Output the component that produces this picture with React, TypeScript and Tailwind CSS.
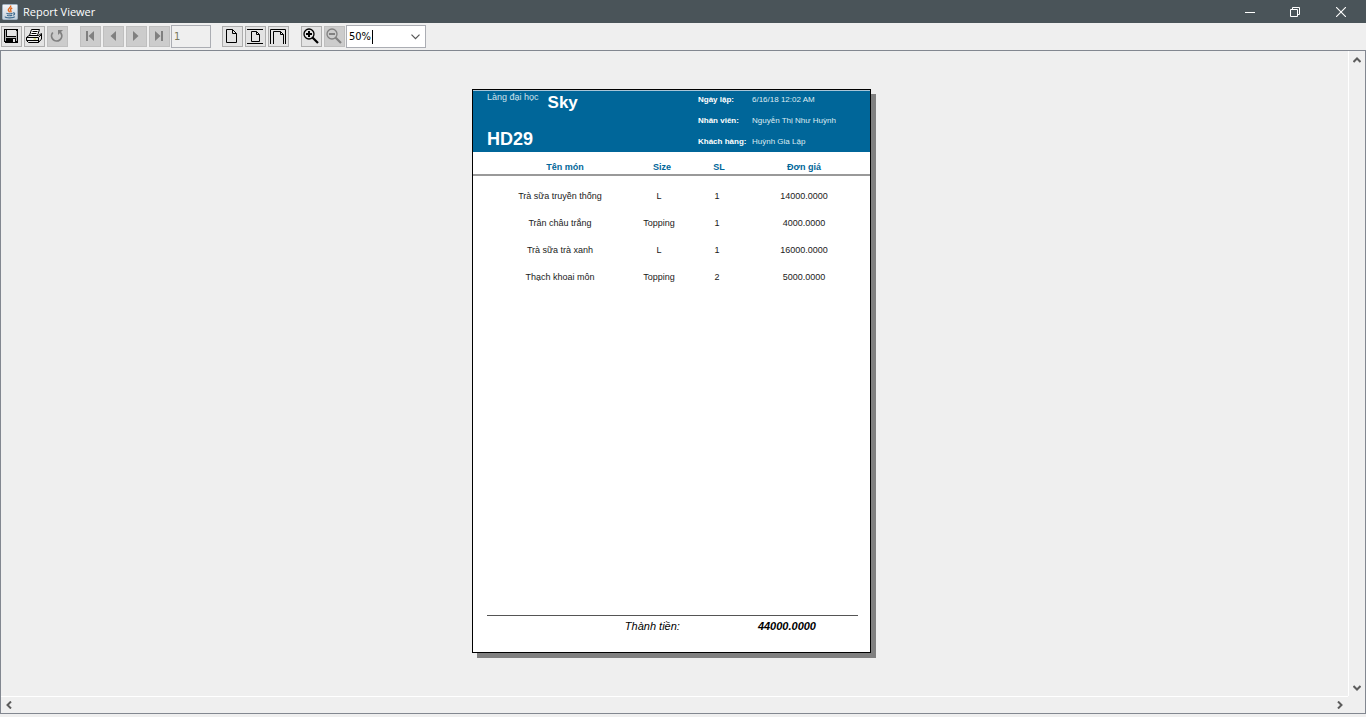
import type { ReactNode } from "react";

const INK = "#000000";
const MUTED = "#808080";

function Icon({ children }: { children: ReactNode }) {
  return (
    <svg viewBox="1 1 19 19" className="block size-[19px]" fill="none" aria-hidden="true">
      {children}
    </svg>
  );
}

function ToolButton({ label, disabled, children }: { label: string; disabled?: boolean; children: ReactNode }) {
  return (
    <button
      type="button"
      aria-label={label}
      disabled={disabled}
      className="size-[21px] shrink-0 border border-[#adadad] bg-[#e3e3e3] disabled:border-[#bfbfbf] disabled:bg-[#cccccc]"
    >
      <Icon>{children}</Icon>
    </button>
  );
}

function JavaIcon() {
  return (
    <svg viewBox="0 0 16 16" className="size-4 shrink-0" fill="none" aria-hidden="true">
      <defs>
        <linearGradient id="java-tile" x1="0" y1="0" x2="0" y2="1">
          <stop offset="0" stopColor="#f4f6f8" />
          <stop offset="1" stopColor="#c3d0dc" />
        </linearGradient>
      </defs>
      <rect x="0.5" y="0.5" width="15" height="15" rx="1" fill="url(#java-tile)" stroke="#9fb2c2" />
      <path d="M8.6 1.5C9.6 3.4 6 4.3 6.3 6C6.5 6.9 7.3 7.3 7.6 8.4M10.2 4C8.4 4.9 8.1 5.7 8.8 6.6C9.3 7.3 9 7.9 8.6 8.4" stroke="#e2661b" strokeWidth="1.4" />
      <path d="M4.4 9.3C5.6 9.8 9 9.8 10.6 9.2M5 11.2C6.4 11.8 9 11.7 10.2 11.1M11 9C13.2 8.6 13 10.6 11.2 11.3M3 12.6C3.4 14.2 11.6 14.2 12.8 12.7" stroke="#3f6c8e" strokeWidth="1.2" />
    </svg>
  );
}

function Magnifier({ color, plus }: { color: string; plus?: boolean }) {
  return (
    <>
      <circle cx="8" cy="8" r="5" stroke={color} strokeWidth="1.3" />
      <path d="M5 8H11" stroke={color} strokeWidth="2" />
      {plus && <path d="M8 5V11" stroke={color} strokeWidth="2" />}
      <path d="M11.5 11.5L17 17" stroke={color} strokeWidth="2.2" />
    </>
  );
}

function Toolbar() {
  return (
    <div className="flex h-[27px] shrink-0 items-center pl-px" role="toolbar" aria-label="Report">
      <div className="flex gap-[2px]">
        <ToolButton label="Save">
          <g shapeRendering="crispEdges">
            <path d="M3 3H17V17H4L3 16Z" fill={INK} />
            <rect x="6" y="4" width="9" height="6" fill="#e3e3e3" />
            <rect x="4" y="4" width="1" height="11" fill="#b0b0b0" />
            <rect x="15" y="5" width="1" height="10" fill="#b0b0b0" />
            <rect x="5" y="11" width="10" height="1" fill="#b0b0b0" />
            <rect x="12" y="13" width="2" height="3" fill="#e3e3e3" />
          </g>
        </ToolButton>
        <ToolButton label="Print">
          <path d="M7.5 3.5H15.5L13.5 9.5H5.5Z" fill="#fff" stroke={INK} />
          <path d="M8.5 5.5H13.5M7.5 7.5H12.5" stroke={INK} />
          <path d="M2.5 11.5L5 9.5H14.5L17.5 7.5V13L14.5 16.5H4.5L2.5 14.5Z" fill="#e8e8e8" stroke={INK} />
          <path d="M2.5 11.5H14.5L17.5 8.5M3 14.5H14.5M14.5 12V16.5" stroke={INK} />
          <path d="M4 13H12" stroke="#fff" />
          <path d="M9.5 13H12" stroke="#c8c832" />
        </ToolButton>
        <ToolButton label="Reload" disabled>
          <path d="M5.8 6.5A5.1 5.1 0 1 0 14 7.2L12.4 5.4" stroke={MUTED} strokeWidth="1.8" />
          <path d="M11 4H16L11 9Z" fill={MUTED} />
        </ToolButton>
      </div>
      <div className="ml-3 flex gap-[2px]">
        <ToolButton label="First page" disabled>
          <path d="M6 5H8V15H6ZM14 5V15L8.5 10Z" fill={MUTED} />
        </ToolButton>
        <ToolButton label="Previous page" disabled>
          <path d="M13 5V15L7.5 10Z" fill={MUTED} />
        </ToolButton>
        <ToolButton label="Next page" disabled>
          <path d="M7 5V15L12.5 10Z" fill={MUTED} />
        </ToolButton>
        <ToolButton label="Last page" disabled>
          <path d="M6 5V15L11.5 10ZM12 5H14V15H12Z" fill={MUTED} />
        </ToolButton>
      </div>
      <input
        aria-label="Page number"
        defaultValue="1"
        disabled
        className="ml-px h-[23px] w-10 border border-[#abadb3] bg-[#efefef] pl-[2px] font-['DejaVu_Sans_Condensed','DejaVu_Sans',sans-serif] text-[11px] text-[#77775a]"
      />
      <div className="ml-[11px] flex gap-[2px]">
        <ToolButton label="Actual size">
          <path d="M4.5 3.5H10.5L14.5 7.5V16.5H4.5ZM10.5 3.5V7.5H14.5" stroke={INK} />
        </ToolButton>
        <ToolButton label="Fit page">
          <path d="M2 3.5H18M2 17.5H18M6.5 5.5H11.5L14.5 8.5V15.5H6.5ZM11.5 5.5V8.5H14.5" stroke={INK} />
        </ToolButton>
        <ToolButton label="Fit width">
          <path d="M2.5 18V3.5H17.5V18M5.5 18V5.5H12.5L15.5 8.5V18M12.5 5.5V8.5H15.5" stroke={INK} />
        </ToolButton>
      </div>
      <div className="ml-3 flex gap-[2px]">
        <ToolButton label="Zoom in">
          <Magnifier color={INK} plus />
        </ToolButton>
        <ToolButton label="Zoom out" disabled>
          <Magnifier color={MUTED} />
        </ToolButton>
      </div>
      <div className="ml-px flex h-[23px] w-20 items-center border border-[#abadb3] bg-white pl-[2px]">
        <input
          aria-label="Zoom"
          defaultValue="50%"
          className="h-[19px] w-[23px] bg-white p-0 font-['DejaVu_Sans_Condensed','DejaVu_Sans',sans-serif] text-[11px] text-black outline-none"
        />
        <span className="h-[14px] w-px bg-black" />
        <button type="button" aria-label="Zoom levels" className="ml-auto flex h-full w-[19px] items-center justify-center">
          <svg viewBox="0 0 9 6" className="h-[6px] w-[9px]" fill="none" aria-hidden="true">
            <path d="M0.5 0.7L4.5 4.7L8.5 0.7" stroke="#555" strokeWidth="1.2" />
          </svg>
        </button>
      </div>
    </div>
  );
}

const details = [
  { term: "Ngày lập:", value: "6/16/18 12:02 AM" },
  { term: "Nhân viên:", value: "Nguyễn Thị Như Huỳnh" },
  { term: "Khách hàng:", value: "Huỳnh Gia Lập" },
];

const items = [
  { name: "Trà sữa truyền thống", size: "L", quantity: 1, price: "14000.0000" },
  { name: "Trân châu trắng", size: "Topping", quantity: 1, price: "4000.0000" },
  { name: "Trà sữa trà xanh", size: "L", quantity: 1, price: "16000.0000" },
  { name: "Thạch khoai môn", size: "Topping", quantity: 2, price: "5000.0000" },
];

function Invoice() {
  return (
    <article className="mr-[5px] mb-[5px] flex min-h-[564px] w-[399px] flex-col border border-black bg-white font-['Liberation_Sans',Arial,sans-serif] text-[9px] text-[#1a1a1a] shadow-[5px_5px_0_#808080]">
      <header className="flex h-[62px] justify-between border-t border-[#a9c6d8] bg-[#006699] text-white">
        <div className="flex flex-col justify-between pb-1 pl-[14px]">
          <div className="flex gap-[9px]">
            <p className="pt-px leading-[10px] text-[#cfe2ec]">Làng đại học</p>
            <p className="pt-[3px] text-[17px] leading-[18px] font-bold">Sky</p>
          </div>
          <h1 className="text-lg leading-[18px] font-bold">HD29</h1>
        </div>
        <dl className="-mt-[2px] grid w-[172px] grid-cols-[54px_1fr] grid-rows-[21px_21px_21px] items-center text-[8px] leading-[10px]">
          {details.map((detail) => (
            <div key={detail.term} className="contents">
              <dt className="font-bold whitespace-nowrap">{detail.term}</dt>
              <dd className="text-[#dcebf2]">{detail.value}</dd>
            </div>
          ))}
        </dl>
      </header>
      <table className="w-full table-fixed border-collapse text-center leading-3">
        <colgroup>
          <col className="w-[157px]" />
          <col className="w-[58px]" />
          <col className="w-[58px]" />
          <col />
        </colgroup>
        <thead className="border-b-2 border-[#999999] text-[#006699]">
          <tr className="h-[23px]">
            <th className="p-0 pt-[7px] pl-[27px]">Tên món</th>
            <th className="p-0 pt-[7px] pl-[6px]">Size</th>
            <th className="p-0 pt-[7px] pl-1">SL</th>
            <th className="p-0 pt-[7px] pr-2">Đơn giá</th>
          </tr>
        </thead>
        <tbody className="before:block before:h-[6px]">
          {items.map((item) => (
            <tr key={item.name} className="h-[27px]">
              <td className="p-0 pl-[17px]">{item.name}</td>
              <td className="p-0">{item.size}</td>
              <td className="p-0">{item.quantity}</td>
              <td className="p-0 pr-2">{item.price}</td>
            </tr>
          ))}
        </tbody>
      </table>
      <footer className="mt-auto mr-3 mb-5 ml-[14px] flex items-center justify-end gap-[78px] border-t border-[#555] pt-1 pr-[42px] text-[11px] leading-3 text-black italic">
        <span>Thành tiền:</span>
        <strong>44000.0000</strong>
      </footer>
    </article>
  );
}

function Arrow({ path, label }: { path: string; label: string }) {
  return (
    <button type="button" aria-label={label} className="flex size-4 items-center justify-center">
      <svg viewBox="0 0 8 8" className="size-2" fill="none" aria-hidden="true">
        <path d={path} stroke="#5c5c5c" strokeWidth="2" />
      </svg>
    </button>
  );
}

export default function App() {
  return (
    <div className="flex h-screen flex-col bg-[#efefef]">
      <header className="flex h-[23px] shrink-0 items-center justify-between bg-[#4a5459] pr-px pl-[2px] text-white">
        <div className="flex items-center gap-[5px]">
          <JavaIcon />
          <span className="font-['Open_Sans',sans-serif] text-[11px] leading-4">Report Viewer</span>
        </div>
        <div className="flex h-[21px]">
          <button type="button" aria-label="Minimize" className="flex w-[45px] items-center justify-center">
            <svg viewBox="0 0 10 10" className="size-[10px]" aria-hidden="true">
              <path d="M0 5.5H10" stroke="white" />
            </svg>
          </button>
          <button type="button" aria-label="Restore" className="flex w-[45px] items-center justify-center">
            <svg viewBox="0 0 10 10" className="size-[10px]" fill="none" aria-hidden="true">
              <path d="M0.5 2.5H7.5V9.5H0.5ZM2.5 2.5V0.5H9.5V7.5H7.5" stroke="white" />
            </svg>
          </button>
          <button type="button" aria-label="Close" className="flex w-[48px] items-center justify-center">
            <svg viewBox="0 0 10 10" className="size-[10px]" aria-hidden="true">
              <path d="M0 0L10 10M10 0L0 10" stroke="white" strokeWidth="1.1" />
            </svg>
          </button>
        </div>
      </header>
      <Toolbar />
      <main className="mb-[3px] grid min-h-0 flex-1 grid-cols-[1fr_17px] grid-rows-[1fr_17px] border border-[#828790]">
        <div className="flex min-h-0 items-center justify-center overflow-hidden pr-px">
          <Invoice />
        </div>
        <div className="flex flex-col justify-between border-l border-white pt-px">
          <Arrow label="Scroll up" path="M0.5 6L4 2.5L7.5 6" />
          <Arrow label="Scroll down" path="M0.5 2L4 5.5L7.5 2" />
        </div>
        <div className="flex justify-between border-t border-white">
          <Arrow label="Scroll left" path="M6 0.5L2.5 4L6 7.5" />
          <Arrow label="Scroll right" path="M2 0.5L5.5 4L2 7.5" />
        </div>
      </main>
    </div>
  );
}
